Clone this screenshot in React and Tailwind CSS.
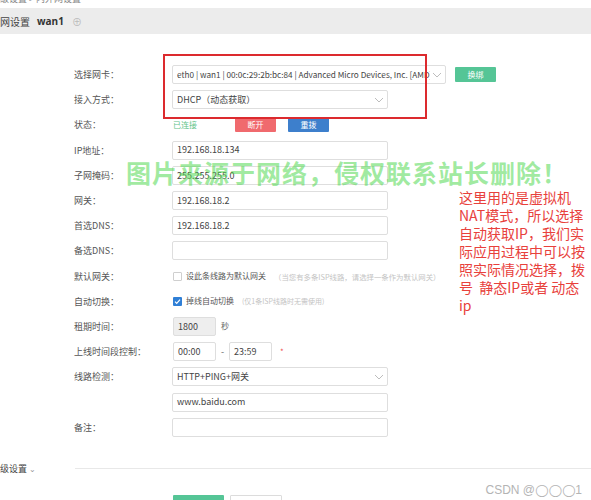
import React from "react";

const cjk = { fontFamily: '"Noto Sans CJK SC", "Noto Sans", sans-serif' };

function Chevron({ className = "" }) {
  return (
    <svg width="10" height="6" viewBox="0 0 10 6" className={className}>
      <path d="M1 1l4 4 4-4" fill="none" stroke="#b5b5b5" strokeWidth="0.9" />
    </svg>
  );
}

function Row({ label, children }) {
  return (
    <div className="flex items-center h-[25.2px]">
      <div className="w-[98px] text-[9px] text-[#555] leading-none">{label}</div>
      <div className="flex items-center">{children}</div>
    </div>
  );
}

function Input({ value = "", w = "w-[216px]", gray = false }) {
  return (
    <div
      className={`${w} h-[19px] border border-[#dedede] rounded-[2px] px-[4px] flex items-center text-[9px] text-[#444] ${
        gray ? "bg-[#eeeeee]" : "bg-white"
      }`}
    >
      {value}
    </div>
  );
}

function Select({ value, w = "w-[216px]", size = "text-[9px]" }) {
  return (
    <div className={`${w} h-[19px] border border-[#dedede] rounded-[2px] pl-[4px] pr-[3px] flex items-center ${size} text-[#444] bg-white`}>
      <div className="flex-1 overflow-hidden whitespace-nowrap">{value}</div>
      <Chevron className="ml-[2px] shrink-0" />
    </div>
  );
}

function Btn({ children, color, w = "w-[41px]" }) {
  return (
    <div className={`${w} h-[15px] ${color} rounded-[1px] text-white text-[8px] flex items-center justify-center`}>
      {children}
    </div>
  );
}

function Box({ checked = false }) {
  return checked ? (
    <div className="w-[9px] h-[9px] rounded-[1px] bg-[#2f7fd6] flex items-center justify-center">
      <svg width="7" height="7" viewBox="0 0 7 7">
        <path d="M1 3.6l1.7 1.7L6 1.6" fill="none" stroke="white" strokeWidth="1.2" />
      </svg>
    </div>
  ) : (
    <div className="w-[9px] h-[9px] rounded-[1px] border border-[#cfcfcf] bg-white" />
  );
}

export default function App() {
  return (
    <div className="relative w-[591px] h-[500px] overflow-hidden bg-white" style={cjk}>
      {/* breadcrumb, scrolled mostly out of view */}
      <div className="h-[8px] overflow-hidden">
        <div className="-mt-[7px] text-[9px] text-[#888] leading-[12px] whitespace-nowrap">级设置 &gt; 内外网设置</div>
      </div>

      {/* section header */}
      <div className="h-[26px] bg-[#ececec] flex items-center text-[10px] text-[#444]">
        <span>网设置</span>
        <span className="ml-[7px] font-bold text-[#333] text-[10px]" style={{ fontFamily: '"Open Sans", "Noto Sans", sans-serif' }}>wan1</span>
        <span className="ml-[8px] text-[#bbb] text-[10px]">⊕</span>
      </div>

      {/* form */}
      <div className="pt-[28px] pl-[74px]">
        <Row label="选择网卡：">
          <Select
            w="w-[274px]"
            size="text-[8.2px]"
            value="eth0 | wan1 | 00:0c:29:2b:bc:84 | Advanced Micro Devices, Inc. [AMD] 79c970 [PCnet32 LANCE]"
          />
          <div className="ml-[9px]">
            <Btn color="bg-[#55c596]">换绑</Btn>
          </div>
        </Row>
        <Row label="接入方式：">
          <Select value="DHCP（动态获取）" />
        </Row>
        <Row label="状态：">
          <span className="ml-[1px] w-[62px] text-[8px] text-[#62c38a]">已连接</span>
          <Btn color="bg-[#f06a6e]">断开</Btn>
          <div className="ml-[12px]">
            <Btn color="bg-[#3d7fcc]">重拨</Btn>
          </div>
        </Row>
        <Row label="IP地址：">
          <Input value="192.168.18.134" />
        </Row>
        <Row label="子网掩码：">
          <Input value="255.255.255.0" />
        </Row>
        <Row label="网关：">
          <Input value="192.168.18.2" />
        </Row>
        <Row label="首选DNS：">
          <Input value="192.168.18.2" />
        </Row>
        <Row label="备选DNS：">
          <Input />
        </Row>
        <Row label="默认网关：">
          <div className="ml-[1px]"><Box /></div>
          <span className="ml-[4px] text-[8px] text-[#555]">设此条线路为默认网关</span>
          <span className="ml-[8px] text-[7.4px] text-[#c4c4c4]">（当您有多条ISP线路，请选择一条作为默认网关）</span>
        </Row>
        <Row label="自动切换：">
          <div className="ml-[1px]"><Box checked /></div>
          <span className="ml-[4px] text-[8px] text-[#555]">掉线自动切换</span>
          <span className="ml-[8px] text-[7px] text-[#c4c4c4]">(仅1条ISP线路时无需使用)</span>
        </Row>
        <Row label="租期时间：">
          <div className="ml-[1px]"><Input value="1800" w="w-[43px]" gray /></div>
          <span className="ml-[5px] text-[8px] text-[#666]">秒</span>
        </Row>
        <Row label="上线时间段控制：">
          <div className="ml-[1px]"><Input value="00:00" w="w-[43px]" /></div>
          <span className="ml-[5px] w-[8px] text-[9px] text-[#666]">-</span>
          <Input value="23:59" w="w-[43px]" />
          <span className="ml-[8px] text-[8px] text-[#f05050]">*</span>
        </Row>
        <Row label="线路检测：">
          <Select value="HTTP+PING+网关" />
        </Row>
        <Row label="">
          <Input value="www.baidu.com" />
        </Row>
        <Row label="备注：">
          <Input />
        </Row>
      </div>

      {/* advanced settings divider */}
      <div className="mt-[23px] flex items-center h-[12px]">
        <span className="w-[75px] shrink-0 text-[9px] text-[#444] whitespace-nowrap">
          级设置 <span className="text-[#999] text-[8px]">⌄</span>
        </span>
        <div className="flex-1 h-px bg-[#e8e8e8]" />
      </div>

      {/* action buttons */}
      <div className="mt-[20px] pl-[173px] flex gap-[6px]">
        <div className="w-[51px] h-[16px] bg-[#55c596] rounded-[1px]" />
        <div className="w-[52px] h-[16px] border border-[#dcdcdc] bg-white rounded-[1px]" />
      </div>

      {/* highlight frame */}
      <div className="absolute left-[163px] top-[54px] w-[264px] h-[65px] border-2 border-[#dc2a2e]" />

      {/* watermark */}
      <div className="absolute left-[126px] top-[160px] text-[25px] leading-none font-bold tracking-[1px] text-[#4fd84f]/55 whitespace-nowrap">
        图片来源于网络，侵权联系站长删除！
      </div>

      {/* note */}
      <div className="absolute left-[459px] top-[188px] text-[14px] leading-[18px] text-[#e8413c] whitespace-pre">
        <div>这里用的是虚拟机</div>
        <div>NAT模式，所以选择</div>
        <div>自动获取IP，我们实</div>
        <div>际应用过程中可以按</div>
        <div>照实际情况选择，拨</div>
        <div>号  静态IP或者 动态</div>
        <div>ip</div>
      </div>

      {/* credit */}
      <div
        className="absolute right-[9px] top-[481px] text-[12px] text-[#b4b4b4] whitespace-nowrap"
        style={{ fontFamily: '"Liberation Sans", "DejaVu Sans", sans-serif' }}
      >
        CSDN @◯◯◯1
      </div>
    </div>
  );
}
